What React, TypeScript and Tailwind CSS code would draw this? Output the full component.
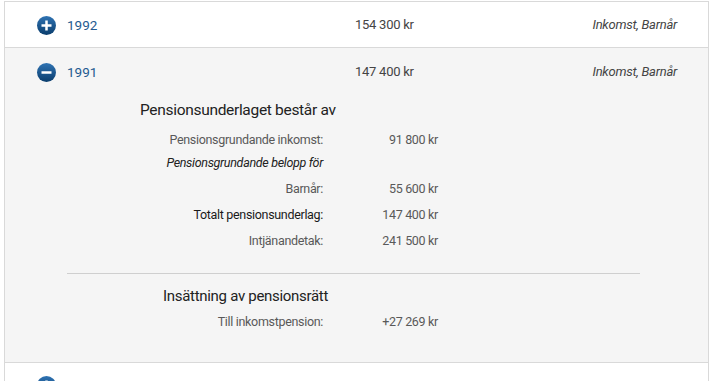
import React from 'react';

const font = { fontFamily: 'Roboto, "Liberation Sans", sans-serif' };

function ToggleIcon({ open }: { open: boolean }) {
  const id = open ? 'gm' : 'gp';
  return (
    <svg width="19" height="19" viewBox="0 0 19 19" className="shrink-0">
      <defs>
        <linearGradient id={id} x1="0" y1="0" x2="0" y2="1">
          <stop offset="0" stopColor="#2f73b3" />
          <stop offset="1" stopColor="#0a3d6d" />
        </linearGradient>
      </defs>
      <circle cx="9.5" cy="9.5" r="9.5" fill={`url(#${id})`} />
      <rect x="4.5" y="8.25" width="10" height="2.5" fill="#fff" />
      {!open && <rect x="8.25" y="4.5" width="2.5" height="10" fill="#fff" />}
    </svg>
  );
}

function YearRow({ year, amount, open, h }: { year?: string; amount?: string; open: boolean; h: string }) {
  return (
    <div className={'flex items-center pl-[32px] pr-[31px] ' + h}>
      <ToggleIcon open={open} />
      <span className="ml-[11px] w-[288px] text-[13.5px] text-[#245a90]">{year}</span>
      <span className="text-[13px] text-[#444] tracking-[-0.02em]">{amount}</span>
      {year && <span className="ml-auto text-[13px] italic text-[#444] tracking-[-0.02em]">Inkomst, Barnår</span>}
    </div>
  );
}

function DetailRow({ label, value, strong, italic }: { label: string; value?: string; strong?: boolean; italic?: boolean }) {
  return (
    <div className="grid h-[26px] grid-cols-[318px_115px] items-center tracking-[-0.02em]">
      <span
        className={
          'text-right text-[12.5px] ' +
          (strong ? 'text-[#1a1a1a]' : italic ? 'text-[#222] italic' : 'text-[#595959]')
        }
      >
        {label}
      </span>
      <span className="text-right text-[12.5px] text-[#595959]">{value}</span>
    </div>
  );
}

export default function App() {
  return (
    <div className="h-[381px] overflow-hidden bg-white pt-[1px]" style={font}>
      <div className="ml-[4px] w-[705px] border-x border-t border-[#d9d9d9]">
        <div className="border-b border-[#d9d9d9] bg-white pt-[1px]">
          <YearRow year="1992" amount="154 300 kr" open={false} h="h-[44px]" />
        </div>
        <div className="border-b border-[#d9d9d9] bg-[#f5f5f5] pb-[27px]">
          <YearRow year="1991" amount="147 400 kr" open h="h-[48px]" />
          <div className="pt-[1px]">
            <h3 className="ml-[135px] h-[26px] text-[15.5px] leading-[26px] text-[#222] tracking-[-0.02em]">
              Pensionsunderlaget består av
            </h3>
            <div className="mt-[4px]">
              <DetailRow label="Pensionsgrundande inkomst:" value="91 800 kr" />
              <div className="-mt-[3px]">
                <DetailRow label="Pensionsgrundande belopp för" italic />
              </div>
              <DetailRow label="Barnår:" value="55 600 kr" />
              <DetailRow label="Totalt pensionsunderlag:" value="147 400 kr" strong />
              <DetailRow label="Intjänandetak:" value="241 500 kr" />
            </div>
            <div className="ml-[62px] mr-[68px] mt-[19px] border-t border-[#cfcfcf]" />
            <h3 className="ml-[158px] mt-[9px] h-[26px] text-[15px] leading-[26px] text-[#222] tracking-[-0.02em]">
              Insättning av pensionsrätt
            </h3>
            <DetailRow label="Till inkomstpension:" value="+27 269 kr" />
          </div>
        </div>
        <div className="bg-white">
          <YearRow open={false} h="h-[45px]" />
        </div>
      </div>
    </div>
  );
}
